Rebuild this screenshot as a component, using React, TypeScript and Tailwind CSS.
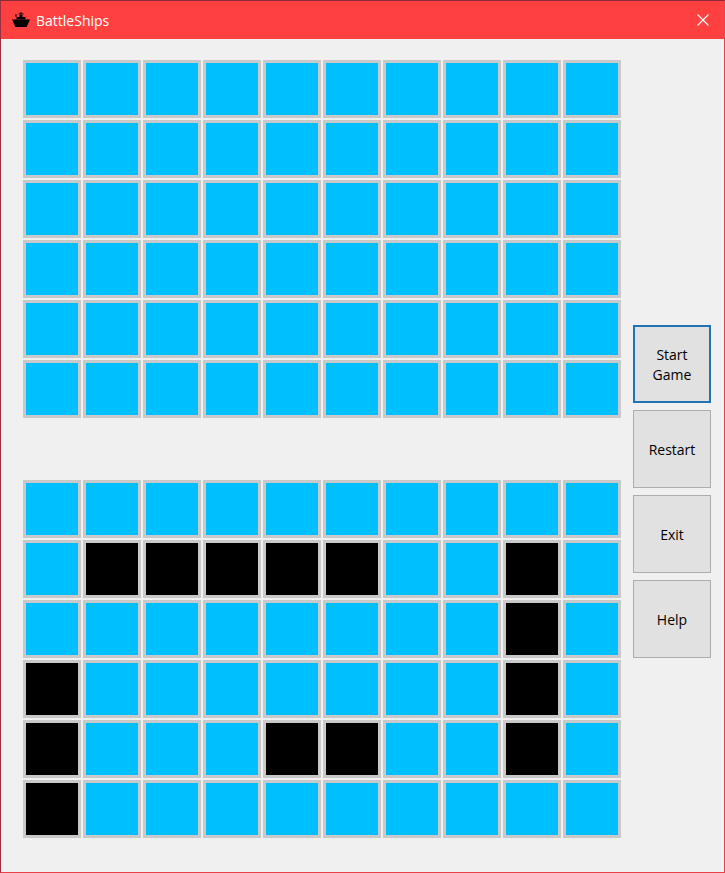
const top = Array.from({ length: 60 }, () => false);
const blackCells = new Set([11, 12, 13, 14, 15, 18, 28, 30, 38, 40, 44, 45, 48, 50]);
const bottom = Array.from({ length: 60 }, (_, i) => blackCells.has(i));

function Board({ cells }: { cells: boolean[] }) {
  return (
    <div className="grid grid-cols-[repeat(10,58px)] grid-rows-[repeat(6,58px)] gap-[2px]">
      {cells.map((black, i) =>
        black ? (
          <div key={i} className="border-[3px] border-[#c9c9c9] bg-black" />
        ) : (
          <div key={i} className="border-[3px] border-[#c9c9c9] bg-[#00bfff]" />
        )
      )}
    </div>
  );
}

function GameButton({ label, active }: { label: string; active?: boolean }) {
  return (
    <button
      className={
        active
          ? "flex h-[78px] w-[78px] items-center justify-center border-2 border-[#2173b5] bg-[#e1e1e1] px-3 pt-[2px] text-center text-[14px] leading-[20px] text-black"
          : "flex h-[78px] w-[78px] items-center justify-center border border-[#adadad] bg-[#e1e1e1] px-3 pt-[2px] text-center text-[14px] leading-[20px] text-black"
      }
    >
      {label}
    </button>
  );
}

export default function App() {
  return (
    <div className="flex h-[873px] w-[725px] flex-col border border-[#e8414a] border-t-[#8a2a3a] border-l-[#9c2f3d] bg-[#f0f0f0] font-['Open_Sans','Liberation_Sans',sans-serif]">
      <div className="flex h-[38px] shrink-0 items-center bg-[#ff4040] pl-[11px] pr-[15px] text-white">
        <svg width="18" height="16" viewBox="0 0 18 16" className="shrink-0">
          <path d="M0 7.5h18l-3.4 7.5H3.4z" fill="#000" />
          <path d="M4.5 7.5V5h9v2.5z" fill="#000" />
          <path d="M7.5 5V2.5h3V5z" fill="#000" />
          <path d="M8.5 2.5V0h1v2.5zM6.5 1.5h5v.8h-5zM3.5 2h1v3h-1z" fill="#000" />
        </svg>
        <span className="ml-[6px] pt-[1px] text-[14px] leading-none">BattleShips</span>
        <svg width="12" height="12" viewBox="0 0 12 12" className="ml-auto shrink-0">
          <path d="M.5.5l11 11M11.5.5l-11 11" stroke="#fff" strokeWidth="1.1" fill="none" />
        </svg>
      </div>
      <div className="flex pl-[22px] pt-[21px]">
        <div className="flex flex-col gap-[62px]">
          <Board cells={top} />
          <Board cells={bottom} />
        </div>
        <div className="ml-[12px] mt-[265px] flex flex-col gap-[7px]">
          <GameButton label="Start Game" active />
          <GameButton label="Restart" />
          <GameButton label="Exit" />
          <GameButton label="Help" />
        </div>
      </div>
    </div>
  );
}
